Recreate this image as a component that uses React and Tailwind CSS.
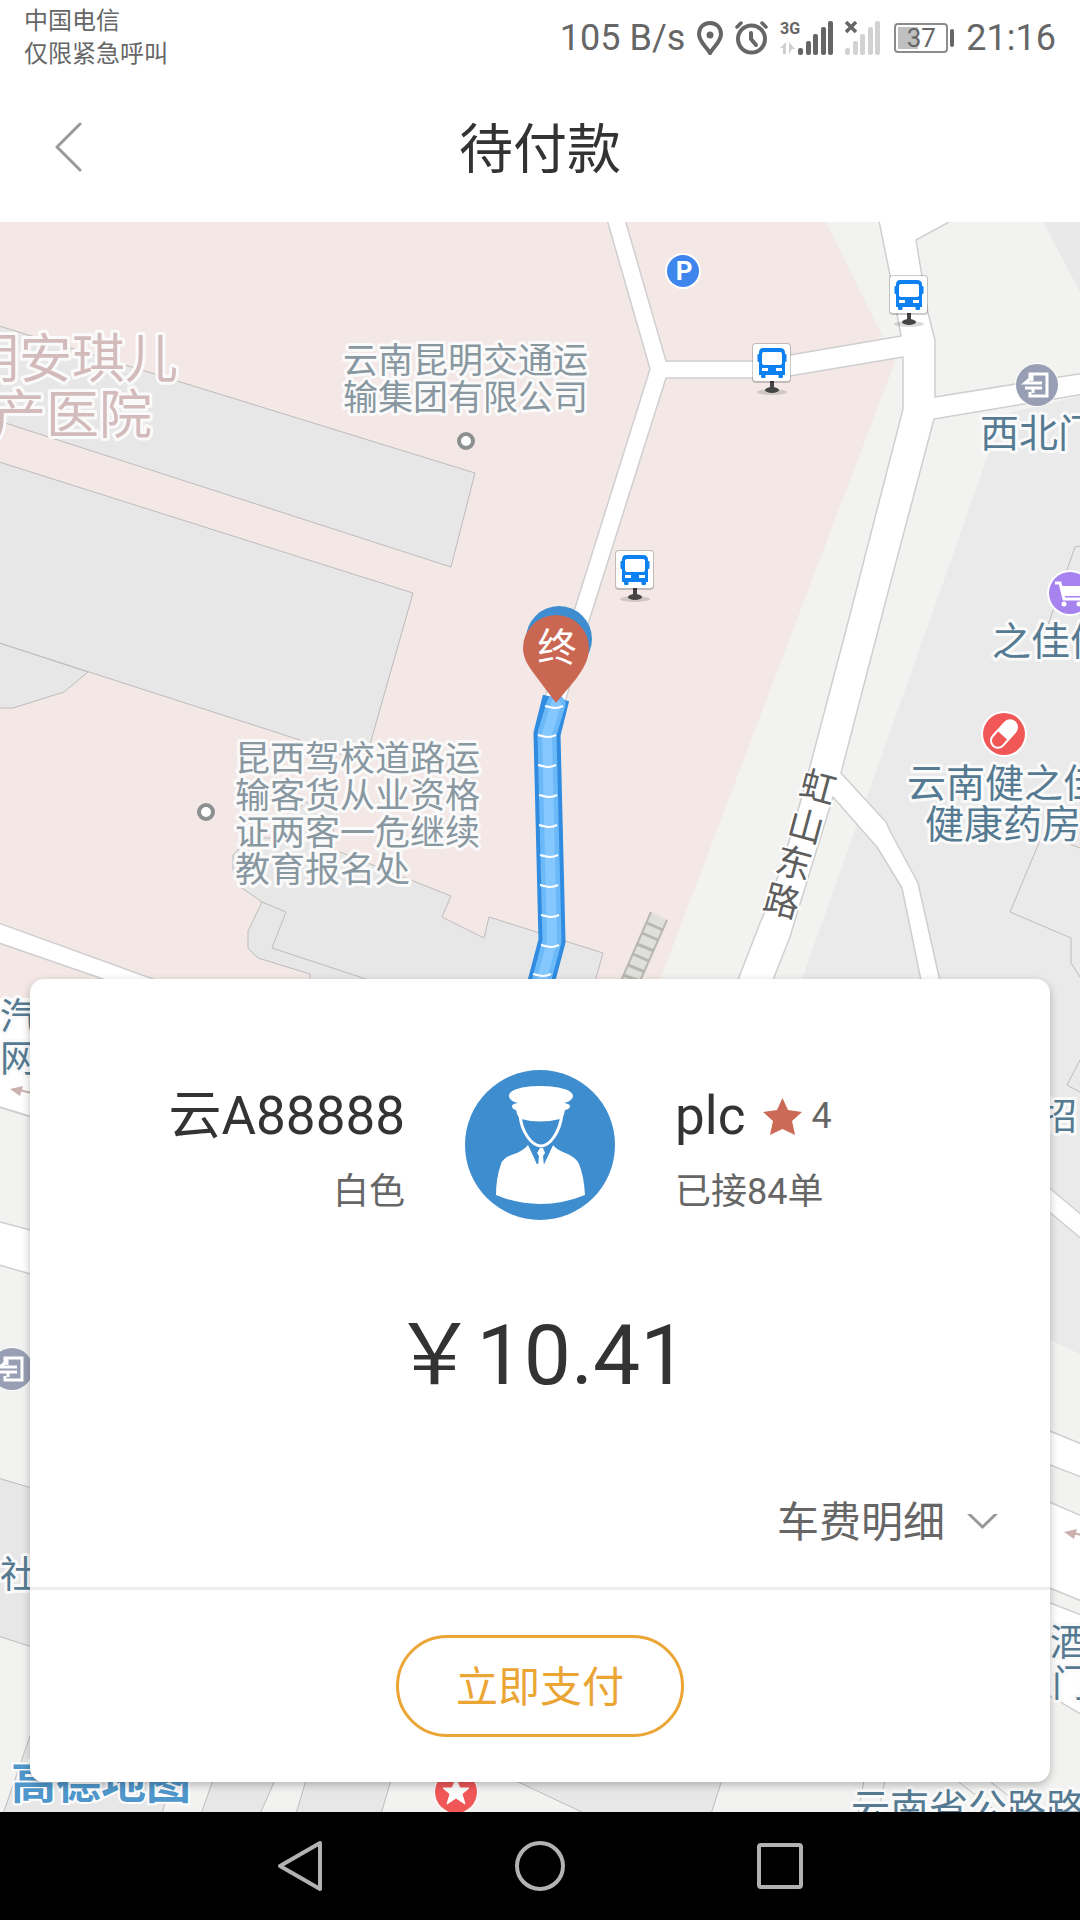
import React from 'react';

const ROAD = { fill: '#ffffff', stroke: '#cfcfd0', strokeWidth: 1.5, strokeLinejoin: 'round' };
const BUILDING = { fill: '#e8e7e7', stroke: '#bcbcbc', strokeWidth: 1 };

// Labels on the map, one entry per text line
const labels = [
  { text: '昆明安琪儿', x: 178, y: 378, size: 53, color: '#d4bbbb', anchor: 'end' },
  { text: '妇产医院', x: 152, y: 434, size: 53, color: '#d4bbbb', anchor: 'end' },
  { text: '云南昆明交通运', x: 343, y: 373, size: 35, color: '#8897a0' },
  { text: '输集团有限公司', x: 343, y: 410, size: 35, color: '#8897a0' },
  { text: '昆西驾校道路运', x: 235, y: 771, size: 35, color: '#8897a0' },
  { text: '输客货从业资格', x: 235, y: 808, size: 35, color: '#8897a0' },
  { text: '证两客一危继续', x: 235, y: 845, size: 35, color: '#8897a0' },
  { text: '教育报名处', x: 235, y: 882, size: 35, color: '#8897a0' },
  { text: '西北门', x: 980, y: 447, size: 39, color: '#557a92' },
  { text: '之佳便利', x: 992, y: 655, size: 39, color: '#557a92' },
  { text: '云南健之佳', x: 907, y: 797, size: 39, color: '#557a92' },
  { text: '健康药房', x: 925, y: 838, size: 39, color: '#557a92' },
  { text: '汽', x: 0, y: 1030, size: 37, color: '#557a92' },
  { text: '网', x: 0, y: 1072, size: 37, color: '#557a92' },
  { text: '社', x: 0, y: 1588, size: 37, color: '#557a92' },
  { text: '招', x: 1040, y: 1130, size: 37, color: '#557a92' },
  { text: '酒', x: 1050, y: 1656, size: 37, color: '#557a92' },
  { text: '门', x: 1052, y: 1697, size: 37, color: '#557a92' },
  { text: '云南省公路路', x: 851, y: 1822, size: 39, color: '#557a92' },
];

const streetName = [
  { char: '虹', x: 818, y: 787 },
  { char: '山', x: 806, y: 826 },
  { char: '东', x: 794, y: 863 },
  { char: '路', x: 782, y: 901 },
];

const busStops = [
  { x: 890, y: 276 },
  { x: 753, y: 344 },
  { x: 616, y: 551 },
];

const routeTicks = [
  [554, 707], [547, 736], [547, 766], [548, 796], [548, 826],
  [549, 856], [549, 886], [550, 916], [550, 946], [542, 975],
];

function BusStop({ x, y }) {
  return (
    <g transform={`translate(${x} ${y})`}>
      <ellipse cx="19" cy="48" rx="15" ry="3" fill="#000" opacity="0.14" />
      <path d="M17 37h4v7h-4z" fill="#444" />
      <ellipse cx="19" cy="46" rx="7" ry="3" fill="#444" />
      <rect x="-1" y="-1" width="39" height="40" rx="4" fill="#000" opacity="0.2" />
      <rect x="0" y="0" width="37" height="37" rx="3" fill="#fff" />
      <path
        d="M10 4h17q5 0 5 5v1h0.500q1 0 1 1v6q0 1-1 1H32v13h-2v2q0 1-1.500 1h-2q-1 0-1-1v-2h-13v2q0 1-1 1h-2q-1.500 0-1.500-1v-2H6V18H5.500q-1 0-1-1v-6q0-1 1-1H6V9q0-5 4-5z"
        fill="#0d80f2"
      />
      <rect x="9" y="8" width="20" height="13" rx="2" fill="#fff" />
      <path d="M9 24h6v3H9zM23 24h6v3h-6z" fill="#fff" />
    </g>
  );
}

function ExitPoi({ x, y }) {
  return (
    <g transform={`translate(${x} ${y})`}>
      <circle r="22" fill="#fff" opacity="0.7" />
      <circle r="21" fill="#989fb4" />
      <path d="M-7 -7v-4H10V11H-7V7" fill="none" stroke="#fff" strokeWidth="3" />
      <path d="M5 -2H-12L-5 -8v4M-12 3H5M-12 3h8v5" fill="none" stroke="#fff" strokeWidth="3" />
    </g>
  );
}

function MapArrow({ x, y }) {
  return (
    <g transform={`translate(${x} ${y})`} fill="#cbb0b0">
      <path d="M0 -1L13 -4L10 6z" />
      <path d="M9 0L26 4" stroke="#cbb0b0" strokeWidth="2" />
    </g>
  );
}

function MapView() {
  return (
    <svg
      className="absolute inset-0 w-full h-full"
      viewBox="0 222 1080 1590"
      preserveAspectRatio="xMidYMin slice"
      fontFamily="Roboto, 'Noto Sans CJK SC', sans-serif"
      role="img"
      aria-label="地图"
    >
      {/* ground */}
      <rect x="0" y="222" width="1080" height="1590" fill="#f2f2f1" />
      <path d="M0 222H826L895 362L660 980V1000H0z" fill="#f3e8e6" />
      <path d="M1043 222H1080V292z" fill="#e9e9e9" />
      <path d="M1002 415L1080 396V1354L1050 1340H700L802 979L937 600z" fill="#eaeaea" />

      {/* buildings */}
      <path d="M-4 325L475 473L451 567L-4 420z" {...BUILDING} />
      <path d="M-4 461L413 593L365 762L303 741L-4 642z" {...BUILDING} />
      <path d="M-4 642L88 672L64 692L13 708H-4z" {...BUILDING} />
      <path
        d="M239 886L233 870V855L251 838H272L305 802L337 813L330 848L451 896L442 917L484 938L489 917L603 953L594 985H310V974L258 958L248 948V931L262 902z"
        {...BUILDING}
      />
      <path d="M262 902L286 912L272 948L369 980" fill="none" stroke="#bcbcbc" />
      <path d="M1080 546L1075 547L1048 625" fill="none" stroke="#bcbcbc" />
      <path d="M1041 838L1010 912L1071 938V963L1080 977M1080 1060L1067 1085L1080 1092M1065 842L1080 848" fill="none" stroke="#bcbcbc" />
      <path d="M-2 1478L32 1488V1647L-2 1636z" {...BUILDING} />
      <path d="M30 1736L3 1814H162L172 1776z" {...BUILDING} />
      <path d="M213 1780L201 1814H260L275 1780z" {...BUILDING} />
      <path d="M306 1780L296 1814H381L391 1780z" {...BUILDING} />
      <path d="M514 1780L586 1814H711L722 1780z" {...BUILDING} />
      <path d="M864 1780L858 1814M885 1780L878 1814M956 1780L1000 1814M988 1780L1032 1814" fill="none" stroke="#bcbcbc" />

      {/* stairway */}
      <path d="M651 912L667 920L640 981H621z" fill="#dfdfdc" />
      <path d="M651 912L621 981M667 920L640 981" stroke="#b8b8b3" strokeWidth="2" />
      <path d="M647 923l16 7M642 933l16 7M637 944l17 7M633 954l16 7M628 965l17 7M623 975l17 6" stroke="#b8b8b3" strokeWidth="3" />

      {/* roads */}
      <path d="M-4 922L153 979L160 985H110L103 979L-4 942z" {...ROAD} />
      <path d="M-4 998H32V1117L-4 1107z" fill="#fff" />
      <path d="M-4 1106L32 1117" stroke="#cfcfd0" strokeWidth="2" />
      <path d="M-4 1221L34 1231V1275L-4 1264z" {...ROAD} />
      <path d="M1040 1180L1084 1217V1241L1040 1204z" {...ROAD} />
      <path d="M1040 1427L1084 1445V1478L1040 1461z" {...ROAD} />
      <path d="M1040 1498L1084 1517V1602L1040 1584z" {...ROAD} />
      <path d="M1040 1599L1084 1616V1716L1040 1690z" {...ROAD} />
      <path
        d="M606 216L650 369L575 608L540 712L562 712L590 618L666 378H752L790 376L903 357V409L846 630L809 770Q780 880 760 923L734 990H769L790 937L796 917L833 797L877 847L902 888L923 990H942L918 883L890 831L886 822L841 773L886 600L934 419L1084 394V373L935 397V340L928 313L916 240L960 216H878L890 275L901 336L790 355L752 361H666L624 216z"
        {...ROAD}
      />
      <MapArrow x={10} y={1090} />
      <MapArrow x={1064} y={1533} />

      {/* driven route */}
      <path d="M556 698L547 734L552 941L539 990" fill="none" stroke="#2f8ce0" strokeWidth="27" strokeLinejoin="round" />
      <path d="M556 704L547 734L552 941L539 990" fill="none" stroke="#6cb9f9" strokeWidth="19" strokeLinejoin="round" strokeLinecap="round" />
      <path d="M556 704L547 734L552 941L539 990" fill="none" stroke="#85c8ff" strokeWidth="10" strokeLinejoin="round" strokeLinecap="round" />
      {routeTicks.map(([x, y]) => (
        <path key={y} d={`M${x - 9} ${y - 1}q8 2 10 2q4 0 8-2`} fill="none" stroke="#fff" strokeWidth="2" />
      ))}

      {/* points of interest */}
      <circle cx="466" cy="441" r="7" fill="#fff" stroke="#8d9090" strokeWidth="4" />
      <circle cx="206" cy="812" r="7" fill="#fff" stroke="#8d9090" strokeWidth="4" />
      <g transform="translate(683 271)">
        <circle r="18" fill="#fff" />
        <circle r="16" fill="#3f85ee" />
        <text x="1" y="9" textAnchor="middle" fontSize="26" fontWeight="700" fill="#fff">P</text>
      </g>
      <g transform="translate(1070 593)">
        <circle r="23" fill="#fff" />
        <circle r="21" fill="#a683ee" />
        <path d="M-15 -10h5l4 16h18" fill="none" stroke="#fff" strokeWidth="3" />
        <path d="M-9 -7H14L11 3H-6z" fill="#fff" />
        <circle cx="-6" cy="11" r="2.500" fill="#fff" />
        <circle cx="9" cy="11" r="2.500" fill="#fff" />
      </g>
      <g transform="translate(1004 734)">
        <circle r="23" fill="#fff" />
        <circle r="21" fill="#f25757" />
        <g transform="rotate(42)">
          <rect x="-7" y="-16" width="14" height="32" rx="7" fill="none" stroke="#fff" strokeWidth="2" />
          <path d="M-7 2V-9a7 7 0 0 1 14 0V2z" fill="#fff" />
        </g>
      </g>
      <g transform="translate(456 1792)">
        <circle r="22" fill="#fff" />
        <circle r="21" fill="#f25757" />
        <path d="M0 -13L4 -4L13 -4L6 2L9 12L0 6L-9 12L-6 2L-13 -4L-4 -4z" fill="#fff" stroke="#fff" strokeLinejoin="round" />
      </g>
      <ExitPoi x={1037} y={385} />
      <ExitPoi x={12} y={1369} />
      {busStops.map((stop) => (
        <BusStop key={stop.x} x={stop.x} y={stop.y} />
      ))}

      {labels.map((label) => (
        <text
          key={`${label.text}-${label.y}`}
          x={label.x}
          y={label.y}
          fontSize={label.size}
          textAnchor={label.anchor || 'start'}
          fill={label.color}
          stroke="#fafafa"
          strokeWidth="6"
          strokeLinejoin="round"
          paintOrder="stroke"
        >
          {label.text}
        </text>
      ))}
      {streetName.map(({ char, x, y }) => (
        <text
          key={char}
          transform={`translate(${x} ${y}) rotate(15)`}
          y="13"
          fontSize="36"
          textAnchor="middle"
          fill="#5e5e5e"
          stroke="#fff"
          strokeWidth="4"
          paintOrder="stroke"
        >
          {char}
        </text>
      ))}
      <text x="11" y="1799" fontSize="45" fontWeight="700" fill="#4f97cb" stroke="#fff" strokeWidth="4" paintOrder="stroke">
        高德地图
      </text>

      {/* end marker */}
      <circle cx="559" cy="639" r="33" fill="#3d8dd0" />
      <path d="M556 703L538 679C530 668 523 660 523 648A33 33 0 0 1 589 648C589 660 583 669 576 679z" fill="#ca6752" />
      <text x="557" y="661" fontSize="39" textAnchor="middle" fill="#fff">终</text>
    </svg>
  );
}

function SignalBars() {
  return (
    <>
      <rect x="0" y="27" width="5" height="7" rx="2" />
      <rect x="8" y="20" width="5" height="14" rx="2" />
      <rect x="15" y="13" width="5" height="21" rx="2" />
      <rect x="23" y="6" width="5" height="28" rx="2" />
      <rect x="30" y="0" width="5" height="34" rx="2" />
    </>
  );
}

function StatusBar() {
  return (
    <div className="flex h-[76px] items-center justify-between px-6 text-[#666666]">
      <div className="text-2xl leading-[33px]">
        <p>中国电信</p>
        <p>仅限紧急呼叫</p>
      </div>
      <div className="flex items-center gap-3 text-4xl">
        <span>105 B/s</span>
        <svg className="h-[34px] w-[26px]" viewBox="0 0 26 34" fill="none">
          <path d="M13 2C6 2 2 7 2 13c0 8 7 12 11 19c4-7 11-11 11-19C24 7 20 2 13 2z" stroke="#666" strokeWidth="4" />
          <circle cx="13" cy="14" r="3.500" fill="#666" />
        </svg>
        <svg className="h-[34px] w-[33px]" viewBox="0 0 33 34" fill="none" stroke="#666" strokeLinecap="round">
          <circle cx="16.500" cy="18" r="13.500" strokeWidth="4" />
          <path d="M2 6L6 2M31 6L27 2" strokeWidth="3.500" />
          <path d="M16 12v6l5 6" strokeWidth="4" />
        </svg>
        <svg className="h-[34px] w-[53px]" viewBox="0 0 53 34">
          <text x="0" y="13" fontSize="16" fontWeight="700" fill="#666">3G</text>
          <path d="M0 27L6 21V33H3V27zM9 21L15 28H12L9 33z" fill="#cfcfcf" />
          <g transform="translate(18 0)" fill="#666">
            <SignalBars />
          </g>
        </svg>
        <svg className="h-[34px] w-[35px]" viewBox="0 0 35 34">
          <g fill="#d2d2d2">
            <SignalBars />
          </g>
          <path d="M1 1L11 11M11 1L1 11" stroke="#666" strokeWidth="3.500" />
        </svg>
        <div className="ml-0.5 flex items-center">
          <div className="relative flex h-[30px] w-[54px] items-center justify-center rounded-[4px] border-2 border-[#8c8c8c] text-[26px] leading-none">
            <div className="absolute inset-y-[2px] left-[2px] w-[20px] bg-[#bfbfbf]" />
            <span className="relative">37</span>
          </div>
          <div className="ml-[2px] h-[18px] w-[4px] rounded-sm bg-[#666666]" />
        </div>
        <span>21:16</span>
      </div>
    </div>
  );
}

function DriverAvatar() {
  return (
    <svg className="h-[150px] w-[150px]" viewBox="0 0 150 150" role="img" aria-label="司机">
      <circle cx="75" cy="75" r="75" fill="#3e8dcf" />
      {/* cap */}
      <path
        d="M75 16C90 16 108 19 108 26C108 29 104 32 99 33Q105 34 105 36Q105 39 100 40L99 44Q98 48 95 49Q75 54 56 49Q53 47 52 44L51 40Q47 39 47 36Q47 34 53 33C48 32 44 29 44 26C44 19 60 16 75 16z"
        fill="#fff"
      />
      {/* chin */}
      <path d="M55 44C56 62 67 76 76 76C85 76 95 62 97 44" fill="none" stroke="#fff" strokeWidth="3" />
      {/* uniform */}
      <path
        d="M63 75Q60 79 52 83Q38 87 36 94Q31 108 31 125Q52 134 75 134Q98 134 120 125Q119 106 114 94Q111 87 98 82Q91 79 88 75L79 94H72z"
        fill="#fff"
      />
      <path d="M64 75L72 94H79L88 75L76 79z" fill="#3e8dcf" />
      <path d="M75 78h3l2 5l-2 3l1 10h-6l1-10l-2-3z" fill="#fff" />
    </svg>
  );
}

function PaymentCard() {
  return (
    <section className="relative rounded-[14px] bg-white shadow-[0_3px_8px_rgba(0,0,0,0.25)]">
      <div className="grid grid-cols-[1fr_150px_1fr] pt-[91px]">
        <div className="flex flex-col gap-5 pt-[14px] pr-[60px] text-right">
          <p className="text-[53px] leading-[64px] text-[#333333]">云A88888</p>
          <p className="text-4xl leading-[48px] text-[#666666]">白色</p>
        </div>
        <DriverAvatar />
        <div className="flex flex-col gap-5 pt-[14px] pl-[60px]">
          <div className="flex items-center">
            <p className="text-[53px] leading-[64px] text-[#333333]">plc</p>
            <svg className="ml-[18px] h-[37px] w-[39px]" viewBox="0 0 39 37">
              <path d="M19.500 0L25 12L39 14L29 23L32 37L19.500 31L7 37L10 23L0 14L14 12z" fill="#cb6a56" />
            </svg>
            <span className="ml-[9px] text-4xl text-[#666666]">4</span>
          </div>
          <p className="text-4xl leading-[48px] text-[#666666]">已接84单</p>
        </div>
      </div>

      <p className="mt-[86px] text-center text-[84px] leading-[100px] text-[#333333]">￥10.41</p>

      <div className="mt-[87px] flex justify-end pr-[52px] pb-[34px]">
        <button type="button" className="flex items-center gap-[22px] text-[42px] leading-[60px] text-[#666666]">
          车费明细
          <svg className="h-[18px] w-[31px]" viewBox="0 0 31 18" fill="none">
            <path d="M2 0L15.500 13L29 0" stroke="#999" strokeWidth="3" strokeLinecap="round" />
          </svg>
        </button>
      </div>

      <div className="flex justify-center border-t-[3px] border-[#eeeeee] py-[45px]">
        <button
          type="button"
          className="h-[102px] w-72 rounded-full border-[3px] border-[#eba534] pt-1 text-[42px] leading-[60px] text-[#eba534]"
        >
          立即支付
        </button>
      </div>
    </section>
  );
}

function NavBar() {
  return (
    <nav className="flex h-[108px] items-center justify-center bg-black">
      <button type="button" aria-label="返回" className="flex w-60 justify-center">
        <svg className="h-[52px] w-[52px]" viewBox="0 0 52 52" fill="none" stroke="#b2b2b2" strokeWidth="4" strokeLinejoin="round">
          <path d="M46 3V49L6 26z" />
        </svg>
      </button>
      <button type="button" aria-label="主页" className="flex w-60 justify-center">
        <svg className="h-[52px] w-[52px]" viewBox="0 0 52 52" fill="none" stroke="#b2b2b2" strokeWidth="4">
          <circle cx="26" cy="26" r="23" />
        </svg>
      </button>
      <button type="button" aria-label="最近任务" className="flex w-60 justify-center">
        <svg className="h-[52px] w-[52px]" viewBox="0 0 52 52" fill="none" stroke="#b2b2b2" strokeWidth="4">
          <rect x="5" y="5" width="42" height="42" rx="2" />
        </svg>
      </button>
    </nav>
  );
}

export default function App() {
  return (
    <div className="flex min-h-screen flex-col bg-white font-[Roboto,'Noto_Sans_CJK_SC',sans-serif]">
      <StatusBar />
      <header className="relative flex h-[146px] items-center justify-center pb-1">
        <button type="button" aria-label="返回" className="absolute left-[54px]">
          <svg className="h-[50px] w-[30px]" viewBox="0 0 30 50" fill="none">
            <path d="M26 2L3 25L26 48" stroke="#999" strokeWidth="3" strokeLinecap="round" strokeLinejoin="round" />
          </svg>
        </button>
        <h1 className="pt-2 text-[54px] leading-[64px] text-[#333333]">待付款</h1>
      </header>
      <main className="relative flex flex-1 flex-col justify-end overflow-hidden p-[30px]">
        <MapView />
        <PaymentCard />
      </main>
      <NavBar />
    </div>
  );
}
